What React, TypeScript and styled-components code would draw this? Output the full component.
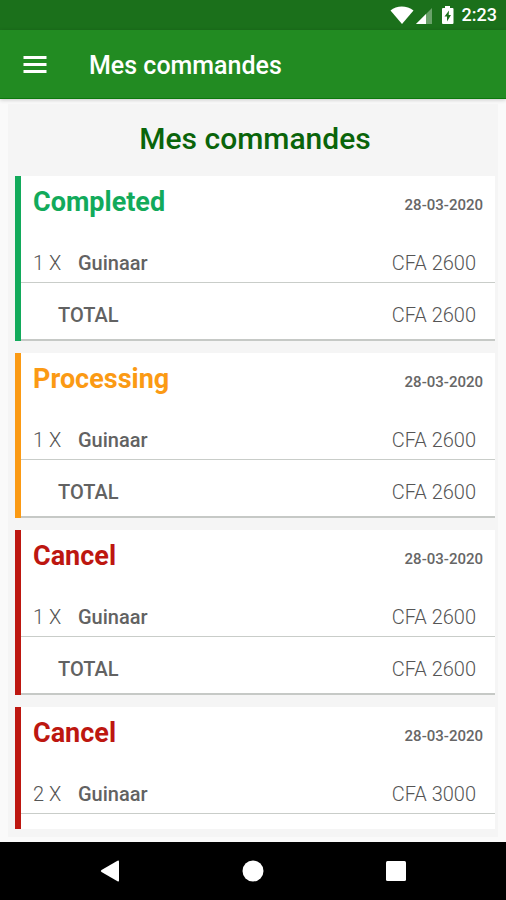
import React from "react";
import styled, { createGlobalStyle } from "styled-components";

const GlobalStyle = createGlobalStyle`
  *, *::before, *::after { box-sizing: border-box; }
  body {
    margin: 0;
    background: #fafafa;
    font-family: Roboto, "Liberation Sans", sans-serif;
  }
  button { font: inherit; }
`;

const Screen = styled.div`
  display: flex;
  flex-direction: column;
  height: 100vh;
  overflow: hidden;
`;

const StatusBar = styled.div`
  display: flex;
  flex: none;
  align-items: center;
  justify-content: flex-end;
  height: 30px;
  padding: 0 9px;
  background: #1b701b;
  color: #fff;
`;

const StatusIcons = styled.svg`
  display: block;
  width: 66px;
  height: 20px;
  margin-right: 6px;
`;

const Clock = styled.time`
  font-size: 18px;
  font-weight: 500;
  line-height: 32px;
`;

const AppBar = styled.header`
  position: relative;
  display: flex;
  flex: none;
  align-items: center;
  gap: 31px;
  height: 69px;
  padding: 0 12px;
  background: #228b22;
  border-bottom: 1px solid #0c780c;
  box-shadow: 0 1px 4px rgba(0, 0, 0, 0.2);
  color: #fff;
`;

const IconButton = styled.button`
  display: grid;
  place-items: center;
  width: 46px;
  height: 46px;
  padding: 0;
  border: 0;
  background: transparent;
  color: #fff;
`;

const AppTitle = styled.div`
  padding-top: 3px;
  font-size: 25px;
  font-weight: 500;
  line-height: 36px;
`;

const Panel = styled.main`
  display: flex;
  flex: 1;
  flex-direction: column;
  min-height: 0;
  margin: 5px 8px;
  padding: 0 3px 8px 7px;
  background: #f5f5f5;
`;

const PageTitle = styled.h1`
  flex: none;
  margin: 0;
  padding: 17px 0 19px;
  color: #0a640a;
  font-size: 30px;
  font-weight: 500;
  line-height: 36px;
  text-align: center;
`;

const OrderList = styled.ul`
  display: flex;
  flex: 1;
  flex-direction: column;
  gap: 12px;
  min-height: 0;
  margin: 0;
  padding: 0;
  overflow-y: auto;
  scrollbar-width: none;
  list-style: none;
`;

const OrderCard = styled.li<{ $color: string }>`
  flex: none;
  border-left: 6px solid ${(p) => p.$color};
  background: #fff;
`;

const CardHeader = styled.div`
  display: flex;
  align-items: center;
  justify-content: space-between;
  height: 68px;
  padding: 0 12px 16px;
`;

const Status = styled.h2<{ $color: string }>`
  margin: 0;
  color: ${(p) => p.$color};
  font-size: 27px;
  font-weight: 700;
  line-height: 32px;
`;

const OrderDate = styled.time`
  padding-top: 6px;
  color: #666;
  font-size: 15px;
  font-weight: 500;
  line-height: 20px;
`;

const Line = styled.div`
  display: flex;
  align-items: center;
  height: 39px;
  padding: 0 19px 0 12px;
  border-bottom: 1px solid #c9cdc9;
  color: #555;
  font-size: 20px;
  font-weight: 300;
  line-height: 24px;
`;

const TotalLine = styled(Line)`
  height: 58px;
  padding-left: 37px;
  padding-top: 8px;
  border-bottom: 2px solid #c6c9c6;
`;

const Quantity = styled.span`
  width: 45px;
`;

const Label = styled.span`
  color: #626262;
  font-weight: 500;
`;

const Amount = styled.span`
  margin-left: auto;
`;

const NavBar = styled.nav`
  display: flex;
  flex: none;
  align-items: center;
  justify-content: center;
  gap: 97px;
  height: 58px;
  background: #000;
`;

type Order = {
  id: number;
  status: "Completed" | "Processing" | "Cancel";
  quantity: number;
  total: number;
};

const statusColors = {
  Completed: "#12aa5b",
  Processing: "#fb9a14",
  Cancel: "#bd1710",
};

const orders: Order[] = [
  { id: 1, status: "Completed", quantity: 1, total: 2600 },
  { id: 2, status: "Processing", quantity: 1, total: 2600 },
  { id: 3, status: "Cancel", quantity: 1, total: 2600 },
  { id: 4, status: "Cancel", quantity: 2, total: 3000 },
];

function OrderItem({ order }: { order: Order }) {
  const color = statusColors[order.status];
  return (
    <OrderCard $color={color}>
      <CardHeader>
        <Status $color={color}>{order.status}</Status>
        <OrderDate dateTime="2020-03-28">28-03-2020</OrderDate>
      </CardHeader>
      <Line>
        <Quantity>{order.quantity} X</Quantity>
        <Label>Guinaar</Label>
        <Amount>CFA {order.total}</Amount>
      </Line>
      <TotalLine>
        <Label>TOTAL</Label>
        <Amount>CFA {order.total}</Amount>
      </TotalLine>
    </OrderCard>
  );
}

export default function App() {
  return (
    <>
      <GlobalStyle />
      <Screen>
        <StatusBar>
          <StatusIcons viewBox="0 0 66 20" fill="#fff" aria-hidden="true">
            <path d="M0.5 5.5C6.5 0.2 17 0.2 23.5 5.5L12 19Z" />
            <path d="M42 3V19H26Z" fillOpacity="0.35" />
            <path d="M36 9V19H26Z" />
            <path
              fillRule="evenodd"
              d="M55 1H60V3H62.5Q63.5 3 63.5 4V18Q63.5 19 62.5 19H53Q52 19 52 18V4Q52 3 53 3H55ZM59 5.5L54.5 11.5H57V16.5L61 10H58.7Z"
            />
          </StatusIcons>
          <Clock>2:23</Clock>
        </StatusBar>
        <AppBar>
          <IconButton type="button" aria-label="Menu">
            <svg width="24" height="18" viewBox="0 0 24 18" fill="currentColor">
              <path d="M0.5 1h23v3h-23zM0.5 8h23v3h-23zM0.5 15h23v3h-23z" />
            </svg>
          </IconButton>
          <AppTitle>Mes commandes</AppTitle>
        </AppBar>
        <Panel>
          <PageTitle>Mes commandes</PageTitle>
          <OrderList>
            {orders.map((order) => (
              <OrderItem key={order.id} order={order} />
            ))}
          </OrderList>
        </Panel>
        <NavBar>
          <IconButton type="button" aria-label="Back">
            <svg width="22" height="22" viewBox="0 0 22 22" fill="currentColor">
              <path d="M18.5 0.8Q20 0 20 1.5V20.5Q20 22 18.5 21.2L2.5 12Q1 11 2.5 10Z" />
            </svg>
          </IconButton>
          <IconButton type="button" aria-label="Home">
            <svg width="22" height="22" viewBox="0 0 22 22" fill="currentColor">
              <circle cx="11" cy="11" r="10.5" />
            </svg>
          </IconButton>
          <IconButton type="button" aria-label="Recent apps">
            <svg width="20" height="20" viewBox="0 0 20 20" fill="currentColor">
              <rect width="20" height="20" rx="1.5" />
            </svg>
          </IconButton>
        </NavBar>
      </Screen>
    </>
  );
}
